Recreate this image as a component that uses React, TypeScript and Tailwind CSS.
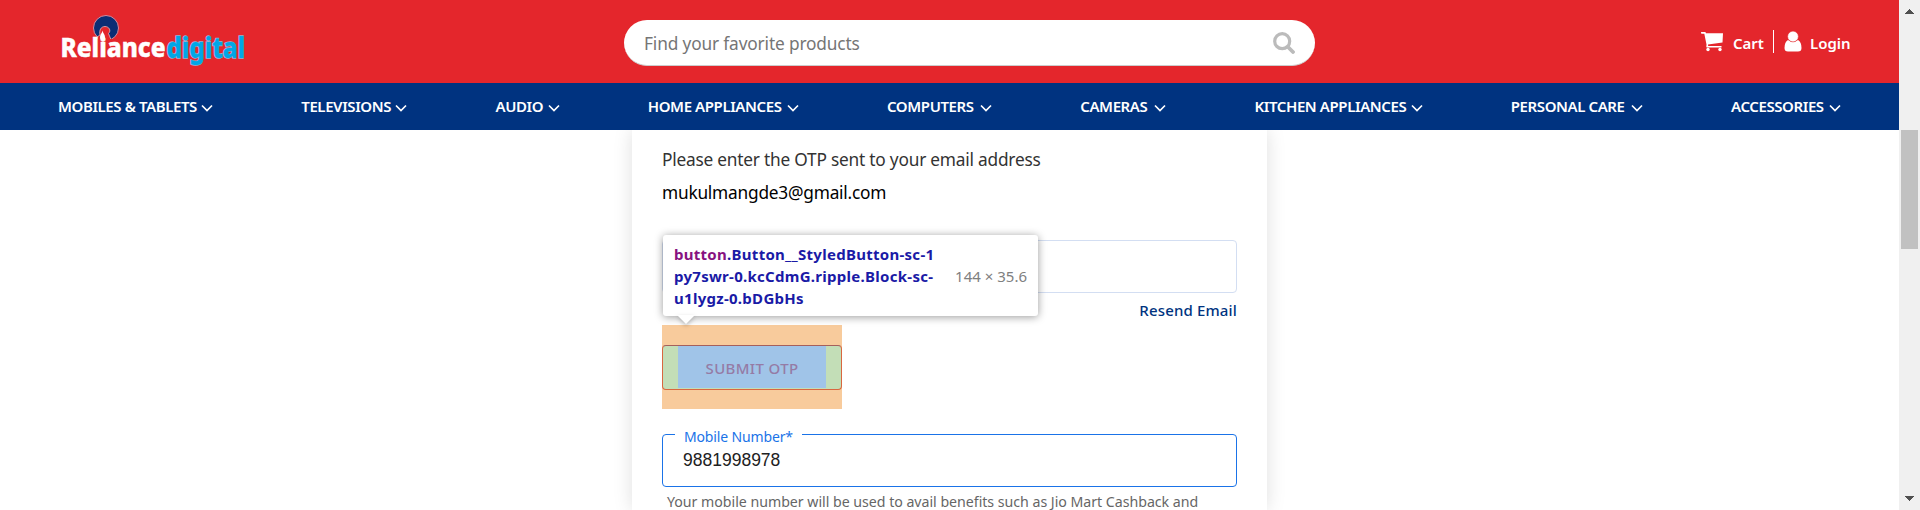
import React from "react";

const items = [
  { label: "MOBILES & TABLETS", w: "w-[155px]" },
  { label: "TELEVISIONS", w: "w-[106px]" },
  { label: "AUDIO", w: "w-[64px]" },
  { label: "HOME APPLIANCES", w: "w-[151px]" },
  { label: "COMPUTERS", w: "w-[105px]" },
  { label: "CAMERAS", w: "w-[86px]" },
  { label: "KITCHEN APPLIANCES", w: "w-[168px]" },
  { label: "PERSONAL CARE", w: "w-[132px]" },
  { label: "ACCESSORIES", w: "w-[110px]" },
];

function Logo() {
  return (
    <svg width="200" height="68" viewBox="58 8 200 68" className="block shrink-0" fontFamily="'Noto Sans', sans-serif" fontWeight="800">
      <circle cx="106" cy="28" r="12.500" fill="#0b2d74" stroke="#d98a9c" strokeWidth="1" />
      <path d="M97 41V37l3-2c-1-5 1-8.500 5-8.500s6.500 4 3.500 7l3 7.500z" fill="#e4262c" stroke="#e9b3b8" strokeWidth=".8" />
      <path d="M96 42v-3h16v3z" fill="#e4262c" />
      <path d="M102.500 30.500c-.3 2.500-2.500 4-2.500 6.500 0 2 1 3 2.500 3s2.500-1 2.500-3c0-2.500-2.200-4-2.500-6.500z" fill="#fff" />
      <text x="60.500" y="57" fontSize="27" fill="#fff" stroke="#fff" strokeWidth=".5" textLength="105" lengthAdjust="spacingAndGlyphs">Reliance</text>
      <text x="166.500" y="58" fontSize="27.500" fill="#00a7e7" stroke="#8fb6d8" strokeWidth="1.400" paintOrder="stroke" textLength="78.500" lengthAdjust="spacingAndGlyphs">digital</text>
    </svg>
  );
}

function Arrow({ up = false }: { up?: boolean }) {
  return (
    <svg width="9" height="5" viewBox="0 0 9 5" shapeRendering="crispEdges" fill="#505050">
      <path d={up ? "M0 5 4.500 0 9 5z" : "M0 0 4.500 5 9 0z"} />
    </svg>
  );
}

export default function App() {
  return (
    <div className="flex h-[510px] w-[1920px] overflow-hidden bg-white font-['Noto_Sans',sans-serif]">
      <div className="flex w-[1899px] flex-col">
        <header className="flex h-[83px] shrink-0 bg-[#e4262c]">
          <div className="ml-[58px] mt-[8px] w-[566px]">
            <Logo />
          </div>
          <div className="mt-5 flex h-[46px] w-[691px] items-center justify-between rounded-full border-b border-[#ccc] bg-white pl-5 pr-5">
            <span className="mt-[2px] text-[17.300px] tracking-[-0.150px] text-[#757575]">Find your favorite products</span>
            <svg width="22" height="22" viewBox="0 0 22 22" fill="none" stroke="#bbb">
              <circle cx="9.200" cy="9.200" r="7.500" strokeWidth="3.200" />
              <path d="m15 15 5 5" strokeWidth="3.800" strokeLinecap="round" />
            </svg>
          </div>
          <div className="ml-auto mr-[48px] mt-[30px] flex h-[23px] items-center text-[15px] font-semibold text-white">
            <svg width="22" height="20" viewBox="0 0 22 20" fill="currentColor" className="mr-[10px]">
              <path d="M0 0h3.800q1 0 1.200 1.200H22L21.500 10.500 7 12.500 7.200 14H20.500V15.500H5.800Q5 15.200 5.500 12.500L3.300 1.800H.5Q0 1.500 0 0z" />
              <circle cx="7" cy="17.500" r="1.700" />
              <circle cx="19" cy="17.500" r="1.700" />
            </svg>
            <span className="mt-[3px] w-[40px]">Cart</span>
            <span className="mr-[10px] h-[23px] w-px bg-white" />
            <svg width="18" height="21" viewBox="0 0 18 21" fill="currentColor" className="mr-[8px]">
              <path d="M4 9Q9 13 14 9 17.500 11 17.500 17 17.500 20.500 14 20.500H4Q.500 20.500 .500 17 .500 11 4 9z" />
              <circle cx="9" cy="5.500" r="5.400" stroke="#e4262c" strokeWidth=".6" />
            </svg>
            <span className="mt-[3px] w-[41px]">Login</span>
          </div>
        </header>
        <nav className="flex h-[47px] shrink-0 items-center justify-between bg-[#003380] pl-[58px] pr-[58px] text-[15px] font-semibold tracking-[-0.400px] text-white">
          {items.map((i) => (
            <div key={i.label} className={"flex items-center justify-between whitespace-nowrap " + i.w}>
              <span>{i.label}</span>
              <svg width="12" height="8" viewBox="0 0 12 8" fill="none" stroke="#fff" strokeWidth="1.700" className="mt-[2px] shrink-0">
                <path d="m1 1.500 5 5 5-5" />
              </svg>
            </div>
          ))}
        </nav>
        <main className="flex h-[380px] justify-center overflow-hidden">
          <section className="w-[635px] bg-white px-[30px] shadow-[0_0_18px_rgba(0,0,0,0.13)]">
            <p className="mt-[16px] h-[27px] whitespace-nowrap text-[17.300px] leading-[27px] tracking-[-0.220px] text-[#333]">Please enter the OTP sent to your email address</p>
            <p className="mt-[6px] h-[27px] whitespace-nowrap text-[17.300px] leading-[27px] tracking-[-0.220px] text-black">mukulmangde3@gmail.com</p>
            <div className="relative mt-[34px] h-[53px] w-[575px] rounded border border-[#d3def2]">
              <div className="absolute left-0 top-[-6px] z-10 flex h-[81px] w-[375px] items-center justify-between rounded-[3px] bg-white pl-[11px] pr-[11px] shadow-[0_1px_8px_rgba(0,0,0,0.4)]">
                <div className="whitespace-nowrap text-[15px] font-bold leading-[22px] tracking-[0.280px] text-[#1a1aa6]">
                  <div><span className="text-[#881280]">button</span>.Button__StyledButton-sc-1</div>
                  <div>py7swr-0.kcCdmG.ripple.Block-sc-</div>
                  <div>u1lygz-0.bDGbHs</div>
                </div>
                <span className="mt-px whitespace-nowrap text-[15px] text-[#808080]">144 × 35.6</span>
                <svg width="18" height="9" className="absolute left-[14px] top-[80px] overflow-visible drop-shadow-[0_2px_2px_rgba(0,0,0,0.25)]"><path d="M0 0h18L9 9z" fill="#fff" /></svg>
              </div>
            </div>
            <p className="mt-[5px] h-[25px] text-right text-[15px] font-medium leading-6 tracking-[0.150px] text-[#003380]">Resend Email</p>
            <div className="mt-[2px] flex h-[84px] w-[180px] items-center bg-[#f8cb9c]">
              <div className="mt-[1px] flex h-[45px] w-[180px] justify-center rounded border border-[#d9673f] border-t-[#a5605c] bg-[#c3deb7]">
                <div className="flex h-[42px] w-[148px] items-center justify-center bg-[#a0c4e8] pt-[3px] text-[15px] font-medium tracking-[0.350px] text-[#957ba5]">SUBMIT OTP</div>
              </div>
            </div>
            <div className="relative mt-[25px] h-[53px] w-[575px] rounded border border-[#1a73e8] pl-[20px] pt-[13px]">
              <span className="absolute left-[12px] top-[-8px] w-[127px] whitespace-nowrap bg-white pl-[9px] text-[14px] leading-5 tracking-[-0.150px] text-[#1a73e8]">Mobile Number*</span>
              <span className="block font-['Liberation_Sans',sans-serif] text-[17.500px] leading-6 text-[#212121]">9881998978</span>
            </div>
            <p className="ml-[5px] mt-[4px] h-[21px] whitespace-nowrap text-[14.200px] leading-[21px] tracking-[-0.030px] text-[#666]">Your mobile number will be used to avail benefits such as Jio Mart Cashback and</p>
          </section>
        </main>
      </div>
      <aside className="flex w-[21px] flex-col items-center bg-[#f0f0f0] pb-[9px] pt-[9px]">
        <Arrow up />
        <div className="mt-[116px] h-[119px] w-[17px] bg-[#c1c1c1]" />
        <div className="mt-auto flex"><Arrow /></div>
      </aside>
    </div>
  );
}
